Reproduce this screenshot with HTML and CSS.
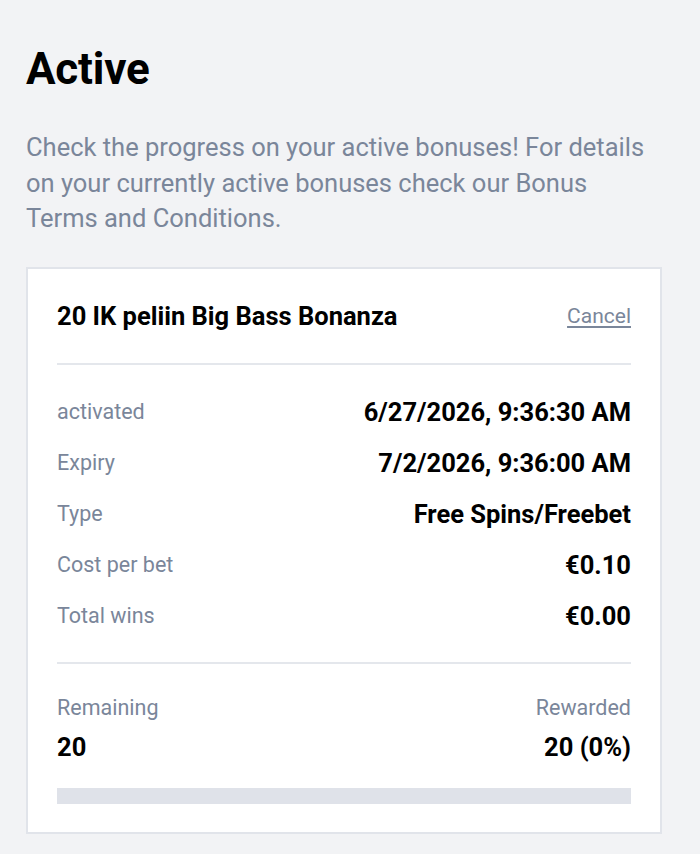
FILE: index.html
```html
<!DOCTYPE html>
<html lang="en">
<head>
<meta charset="utf-8">
<title>Active</title>
<link rel="stylesheet" href="styles.css">
</head>
<body>
<main class="page">
  <h1 class="title">Active</h1>
  <p class="intro">Check the progress on your active bonuses! For details on your currently active bonuses check our Bonus Terms and Conditions.</p>
  <section class="card">
    <div class="card-head">
      <span class="card-title">20 IK peliin Big Bass Bonanza</span>
      <a class="cancel" href="#">Cancel</a>
    </div>
    <div class="rows">
      <div class="row"><span class="label">activated</span><span class="value">6/27/2026, 9:36:30 AM</span></div>
      <div class="row"><span class="label">Expiry</span><span class="value">7/2/2026, 9:36:00 AM</span></div>
      <div class="row"><span class="label">Type</span><span class="value">Free Spins/Freebet</span></div>
      <div class="row"><span class="label">Cost per bet</span><span class="value">€0.10</span></div>
      <div class="row"><span class="label">Total wins</span><span class="value">€0.00</span></div>
    </div>
    <div class="progress">
      <div class="progress-labels">
        <span class="label">Remaining</span>
        <span class="label">Rewarded</span>
      </div>
      <div class="progress-values">
        <span class="value">20</span>
        <span class="value">20 (0%)</span>
      </div>
      <div class="bar"><div class="bar-fill" style="width:0%"></div></div>
    </div>
  </section>
</main>
</body>
</html>
```
FILE: styles.css
```css
* { box-sizing: border-box; }
html, body {
  margin: 0;
  padding: 0;
  background: #f2f3f5;
}
body {
  font-family: Roboto, "Noto Sans", "Liberation Sans", sans-serif;
  color: #000;
}
.page {
  width: 636px;
  margin-left: 26px;
  padding-top: 42px;
  padding-bottom: 19px;
}
.title {
  margin: 0;
  font-size: 44px;
  line-height: 54px;
  font-weight: 700;
  letter-spacing: -0.2px;
}
.intro {
  margin: 34px 0 30px;
  max-width: 625px;
  font-size: 25.5px;
  line-height: 35.5px;
  color: #7a869a;
}
.card {
  background: #fff;
  border: 2px solid #e1e4ea;
  padding: 0 29px;
}
.card-head {
  display: flex;
  justify-content: space-between;
  align-items: center;
  padding: 30px 0;
  border-bottom: 2px solid #e4e7ec;
}
.card-title {
  font-size: 25.5px;
  line-height: 34px;
  font-weight: 700;
}
.cancel {
  font-size: 21px;
  line-height: 34px;
  color: #7a869a;
  text-decoration: underline;
  text-underline-offset: 3px;
}
.rows {
  display: flex;
  flex-direction: column;
  gap: 21px;
  padding: 32px 0 31px;
  border-bottom: 2px solid #e4e7ec;
}
.row {
  display: flex;
  justify-content: space-between;
  align-items: center;
  height: 30px;
}
.label {
  font-size: 21.5px;
  line-height: 28px;
  color: #7a869a;
}
.value {
  font-size: 25.5px;
  line-height: 30px;
  font-weight: 700;
}
.progress {
  padding: 30px 0 28px;
}
.progress-labels,
.progress-values {
  display: flex;
  justify-content: space-between;
}
.progress-values {
  margin-top: 10px;
}
.bar {
  margin-top: 26px;
  height: 16px;
  background: #dfe2e9;
}
.bar-fill {
  height: 100%;
  background: #2c8a4c;
}
```
